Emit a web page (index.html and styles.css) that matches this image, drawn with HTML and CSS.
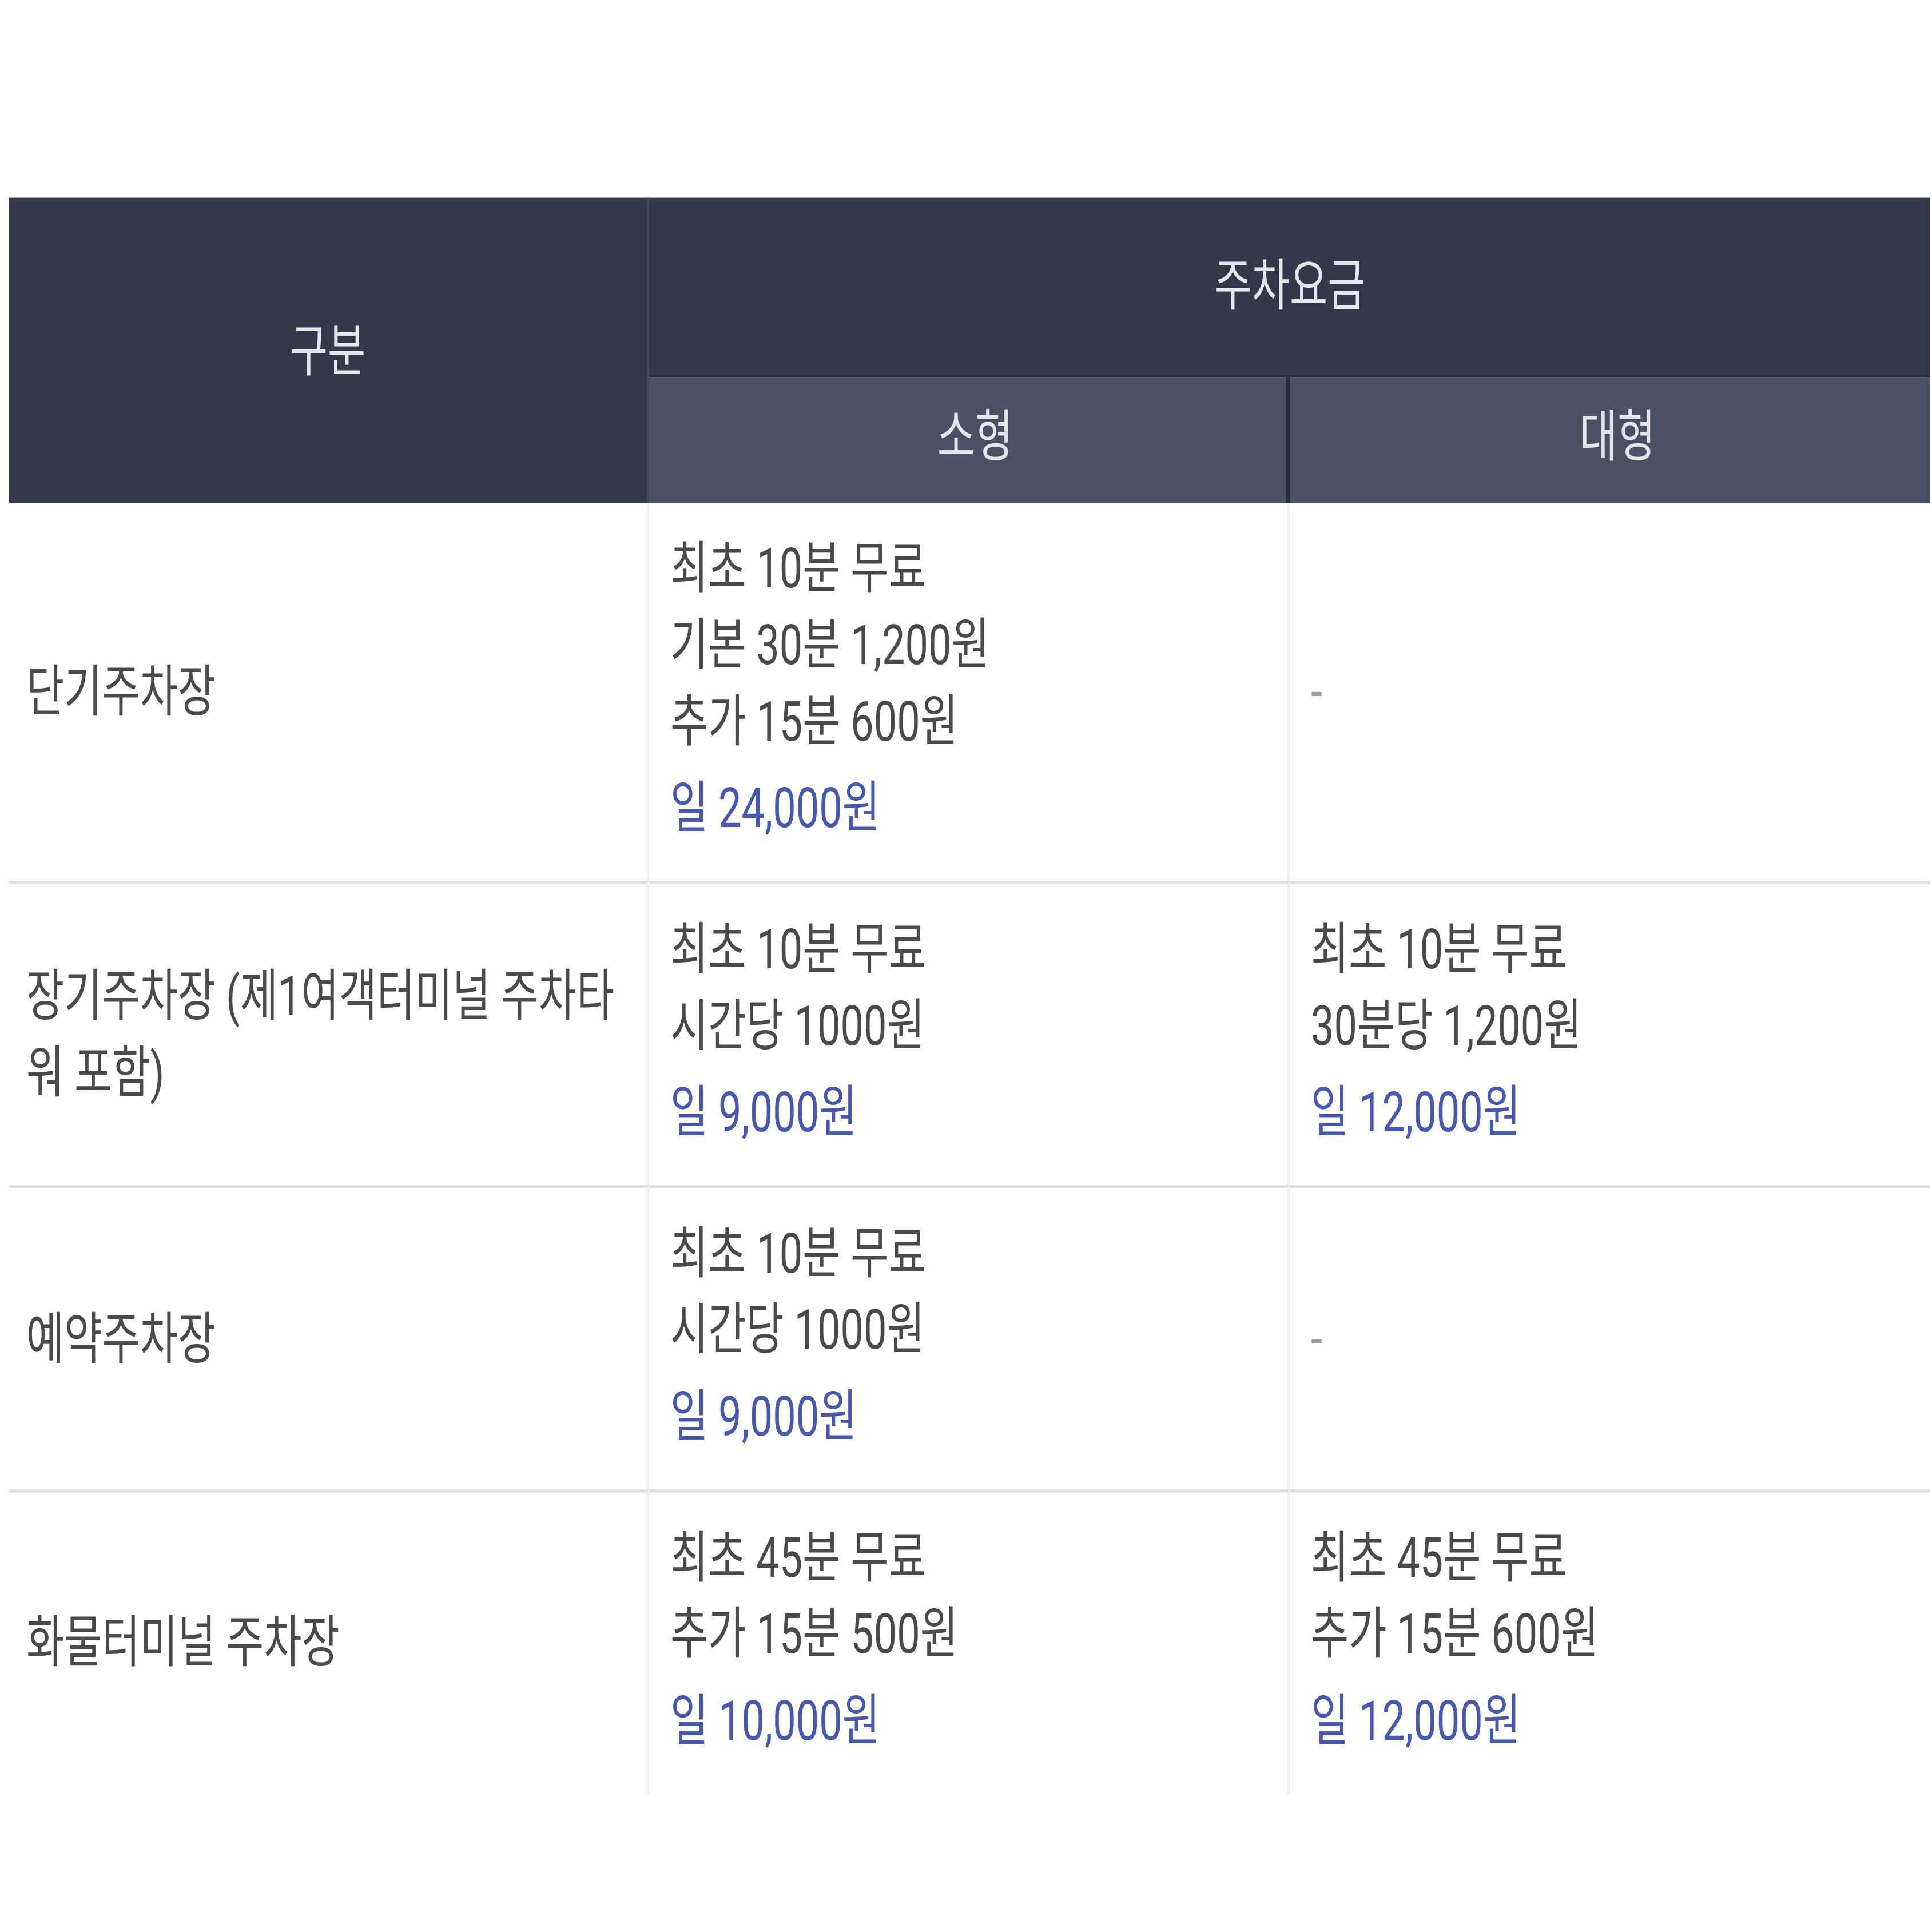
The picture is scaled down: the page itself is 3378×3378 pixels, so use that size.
FILE: index.html
```html
<!DOCTYPE html>
<html lang="ko">
<head>
<meta charset="utf-8">
<title>주차요금</title>
<link rel="stylesheet" href="styles.css">
</head>
<body>
<div class="stage">
  <div class="fee">
    <div class="th th-main">구분</div>
    <div class="th th-group">주차요금</div>
    <div class="th th-sub th-split">소형</div>
    <div class="th th-sub th-last">대형</div>

    <div class="td td-label">단기주차장</div>
    <div class="td td-price td-mid">
      <div class="ln">최초 10분 무료</div>
      <div class="ln">기본 30분 1,200원</div>
      <div class="ln">추가 15분 600원</div>
      <div class="ln day">일 24,000원</div>
    </div>
    <div class="td td-price td-none"><div class="ln dash">-</div></div>

    <div class="td td-label sep">장기주차장 (제1여객터미널 주차타워 포함)</div>
    <div class="td td-price td-mid sep">
      <div class="ln">최초 10분 무료</div>
      <div class="ln">시간당 1000원</div>
      <div class="ln day">일 9,000원</div>
    </div>
    <div class="td td-price sep">
      <div class="ln">최초 10분 무료</div>
      <div class="ln">30분당 1,200원</div>
      <div class="ln day">일 12,000원</div>
    </div>

    <div class="td td-label sep">예약주차장</div>
    <div class="td td-price td-mid sep">
      <div class="ln">최초 10분 무료</div>
      <div class="ln">시간당 1000원</div>
      <div class="ln day">일 9,000원</div>
    </div>
    <div class="td td-price td-none sep"><div class="ln dash">-</div></div>

    <div class="td td-label sep">화물터미널 주차장</div>
    <div class="td td-price td-mid sep">
      <div class="ln">최초 45분 무료</div>
      <div class="ln">추가 15분 500원</div>
      <div class="ln day">일 10,000원</div>
    </div>
    <div class="td td-price sep">
      <div class="ln">최초 45분 무료</div>
      <div class="ln">추가 15분 600원</div>
      <div class="ln day">일 12,000원</div>
    </div>
  </div>
</div>
</body>
</html>
```
FILE: styles.css
```css
html, body {
  margin: 0;
  padding: 0;
  background: #ffffff;
}

body {
  min-height: 3378px;
  font-family: Roboto, "Noto Sans CJK KR", sans-serif;
  font-size: 72px;
  color: #4a4a4a;
}

/* the reference is an anamorphically stretched capture: glyphs are taller than wide */
.stage {
  padding-top: 255.6px;
  padding-left: 15px;
  transform: scaleY(1.35);
  transform-origin: 0 0;
}

.fee {
  display: grid;
  grid-template-columns: 1120px 1120px 1120px;
  width: 3360px;
}

.th {
  display: flex;
  align-items: center;
  justify-content: center;
  color: #e6e7ec;
  line-height: 1;
  box-sizing: border-box;
}

.th-main {
  grid-column: 1;
  grid-row: 1 / 3;
  background: #343749;
  border-right: 4px solid #45485b;
  padding-top: 4px;
}

.th-group {
  grid-column: 2 / 4;
  grid-row: 1;
  height: 233.3px;
  background: #343749;
  border-bottom: 3.7px solid #262a3b;
}

.th-sub {
  grid-row: 2;
  height: 163px;
  background: #4b5064;
  padding-left: 26px;
  padding-bottom: 8px;
}

.th-split {
  grid-column: 2;
  border-right: 6px solid #2a2d3e;
}

.th-last {
  grid-column: 3;
}

.td {
  box-sizing: border-box;
  background: #ffffff;
}

.td-label {
  display: flex;
  align-items: center;
  padding: 36px 30px 36px 31px;
  line-height: 99.3px;
  border-right: 4px solid #f0f1f6;
  word-break: break-all;
}

.td-price {
  padding: 35px 36px 44.5px 37px;
}

.td-mid {
  border-right: 4px solid #f0f1f6;
}

.td-none {
  display: flex;
  align-items: center;
  padding-top: 38px;
  padding-bottom: 38px;
}

.sep {
  border-top: 4.8px solid #dfdfdf;
}

.ln {
  line-height: 99.3px;
  white-space: nowrap;
}

.day {
  color: #4858ad;
  margin-top: 12.6px;
}

.dash {
  color: #9a9a9a;
}
```
